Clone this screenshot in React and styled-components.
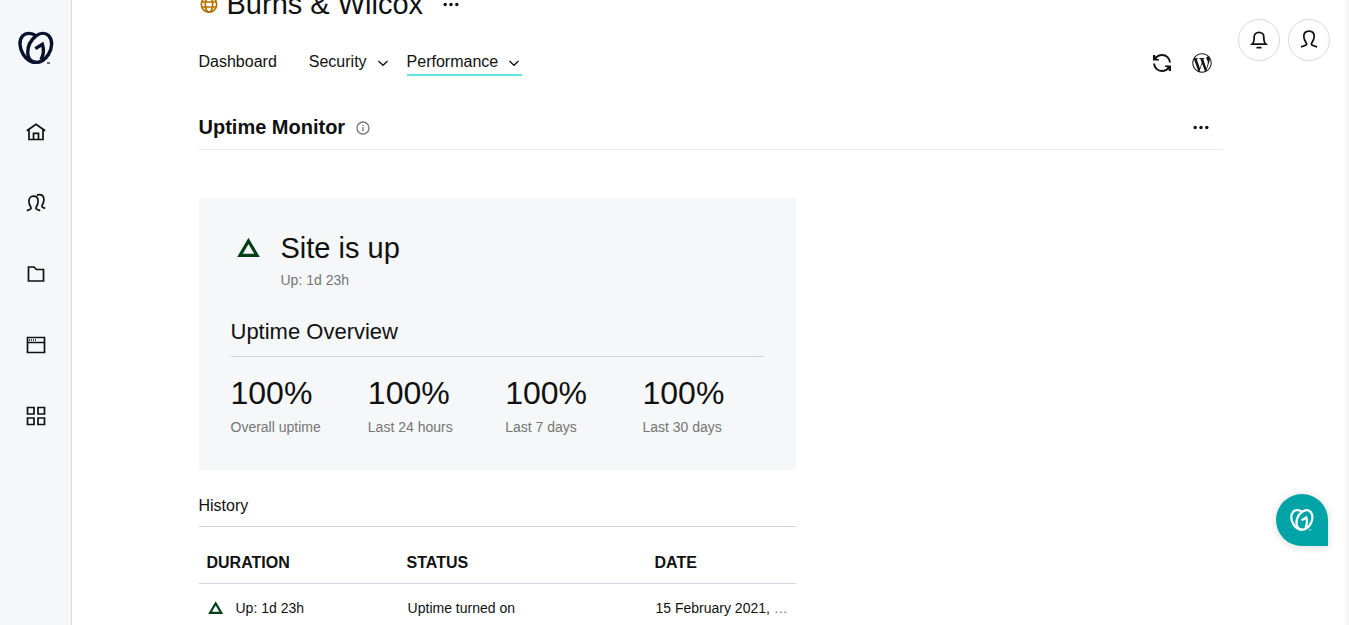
import React from 'react';
import styled, { createGlobalStyle, css } from 'styled-components';
import { FaWordpressSimple } from 'react-icons/fa';

const GlobalStyle = createGlobalStyle`
  * {
    box-sizing: border-box;
  }

  body {
    margin: 0;
    color: #111;
    background-color: #fff;
    font-family: "Liberation Sans", Arial, sans-serif;
    font-size: 16px;
    line-height: 24px;
  }

  h1, h2, h3, h4, p {
    margin: 0;
    font-weight: normal;
  }

  svg {
    display: block;
    flex-shrink: 0;
  }
`;

const Page = styled.div`
  display: flex;
  height: 100vh;
  overflow: hidden;
`;

const Sidebar = styled.nav`
  display: flex;
  flex-direction: column;
  align-items: center;
  flex-shrink: 0;
  width: 72px;
  padding-top: 30px;
  background-color: #f5f7f8;
  border-right: 1px solid #d4dbe0;
`;

const SideMenu = styled.div`
  display: flex;
  flex-direction: column;
  gap: 47px;
  margin-top: 54px;
`;

const SideLink = styled.a`
  color: #111;
`;

const Main = styled.main`
  flex: 1;
  min-width: 0;
  padding: 0 24px;
  box-shadow: inset -6px 0 6px -5px rgba(0, 0, 0, 0.08);
`;

const Container = styled.div`
  max-width: 1024px;
  margin: 0 auto;
`;

const SiteHeader = styled.header`
  display: flex;
  align-items: center;
  margin-top: -12px;
`;

const SiteName = styled.h1`
  margin: 0 20px 0 8px;
  font-size: 29px;
  line-height: 32px;
`;

const IconButton = styled.button`
  padding: 0;
  border: none;
  background: none;
  color: #111;
  cursor: pointer;
`;

const NavBar = styled.div`
  display: flex;
  align-items: center;
  justify-content: space-between;
  margin-top: 30px;
`;

const Tabs = styled.nav`
  display: flex;
  gap: 16px;
`;

const Tab = styled.a`
  display: flex;
  align-items: center;
  gap: 8px;
  margin-right: ${(props) => (props.$plain ? '16px' : '0')};
  border-bottom: 2px solid ${(props) => (props.$active ? '#5ce7df' : 'transparent')};
  color: #111;
  text-decoration: none;
`;

const Tools = styled.div`
  display: flex;
  align-items: center;
  gap: 20px;
  padding-right: 11px;
`;

const SectionHeader = styled.div`
  display: flex;
  align-items: center;
  justify-content: space-between;
  margin-top: 39px;
  padding: 0 14px 10px 0;
  border-bottom: 1px solid #e6e8ea;
`;

const SectionTitle = styled.h2`
  display: flex;
  align-items: center;
  gap: 10px;
  font-size: 20px;
  font-weight: bold;
  color: #111;
`;

const Columns = styled.div`
  display: grid;
  grid-template-columns: 7fr 5fr;
  margin-top: 48px;
`;

const Card = styled.section`
  padding: 32px;
  border-radius: 2px;
  background-color: #f5f7f8;
`;

const Status = styled.div`
  display: flex;
  gap: 20px;
`;

const StatusIcon = styled.div`
  padding: 6px 0 0 6px;
`;

const StatusTitle = styled.h3`
  font-size: 29px;
  line-height: 36px;
`;

const Caption = styled.p`
  margin-top: 4px;
  font-size: 14px;
  line-height: 21px;
  color: #767676;
`;

const OverviewTitle = styled.h3`
  margin-top: 27px;
  padding-bottom: 10px;
  border-bottom: 1px solid #ccd6dc;
  font-size: 22px;
  line-height: 28px;
`;

const Stats = styled.div`
  display: grid;
  grid-template-columns: repeat(4, 1fr);
  gap: 16px;
  margin-top: 16px;
`;

const StatValue = styled.div`
  font-size: 32px;
  line-height: 40px;
`;

const HistoryTitle = styled.h4`
  margin-top: 24px;
  padding-bottom: 8px;
  border-bottom: 1px solid #d0d6dc;
`;

const Table = styled.table`
  width: 100%;
  table-layout: fixed;
  border-collapse: separate;
  border-spacing: 0;
`;

const HeadCell = styled.th`
  width: ${(props) => props.$width};
  padding: 24px 8px 8px;
  border-bottom: 1px solid #d0d6dc;
  text-align: left;
`;

const Cell = styled.td`
  padding: 12px 9px;
  font-size: 14px;
  white-space: nowrap;
`;

const Duration = styled.div`
  display: flex;
  align-items: center;
  gap: 12px;
`;

const Faded = styled.span`
  color: #767676;
`;

const floating = css`
  position: fixed;
  z-index: 10;
`;

const UserActions = styled.div`
  ${floating}
  top: 19px;
  right: 19px;
  display: flex;
  gap: 8px;
`;

const RoundButton = styled.button`
  display: flex;
  align-items: center;
  justify-content: center;
  width: 42px;
  height: 42px;
  padding: 0;
  border: 1px solid #d8d8d8;
  border-radius: 50%;
  background-color: #fff;
  color: #111;
  cursor: pointer;
`;

const ChatButton = styled.button`
  ${floating}
  right: 21px;
  bottom: 79px;
  display: flex;
  align-items: center;
  justify-content: center;
  width: 52px;
  height: 52px;
  padding: 0;
  border: none;
  border-radius: 50% 50% 0 50%;
  background-color: #00a4a6;
  box-shadow: 0 1px 8px rgba(0, 0, 0, 0.15);
  color: #fff;
  cursor: pointer;
`;

const Icon = ({ size = 24, width = 1.7, children }) => (
  <svg width={size} height={size} viewBox="0 0 24 24" fill="none" stroke="currentColor" strokeWidth={width} aria-hidden="true">
    {children}
  </svg>
);

const Logo = ({ size, color }) => (
  <svg width={size} height={size} viewBox="0 0 36 36" fill="none" stroke={color} strokeWidth="3.4" aria-hidden="true">
    <path d="M18 5.800C13.800 2.500 8 2.500 4.700 5.800C.7 10 1.200 18 5.300 24.500C8.200 29 12.500 32.400 18 32.400" />
    <path d="M18 5.800C22.500 2.500 27.500 2.500 30.800 5.800C34.800 10 34.500 18 30.400 24.500C27.500 29 23.500 32.400 18 32.400C13 32.400 9.700 28.500 9.700 22.500C9.700 15.500 13.300 9.500 18 5.800Z" />
    <path d="M17.300 18.600L24.400 14.200C26.200 19.500 25.600 25 23 29.800" />
    <path d="M29 33h3" strokeWidth="1.200" />
  </svg>
);

const HomeIcon = () => (
  <Icon>
    <path d="M2.800 10.800L12 4.200l9.200 6.600M5 9.800v9.700h14V9.800M9.500 19.500v-6.200h5v6.200" />
  </Icon>
);

const PeopleIcon = () => (
  <Icon>
    <path d="M2.800 19.600c3-.9 4.800-1.500 4.200-3C5.700 14.700 4.900 12.500 4.900 10.300 4.900 7 6.800 5.200 9.500 5.200s4.600 1.800 4.600 5.100c0 2.200-.8 4.400-2.100 6.300-.6 1.500 1.200 2.100 4.200 3" />
    <path d="M12.800 4.200c.8-.4 1.600-.6 2.400-.6 2.900 0 4.700 1.900 4.700 5.100 0 2.100-.7 4.100-1.900 5.800-.6 1.600 1 2.200 3.200 2.900" />
  </Icon>
);

const FolderIcon = () => (
  <Icon>
    <path d="M4.500 5h5.500l2.500 2.500h7v11.500h-15z" />
  </Icon>
);

const WindowIcon = () => (
  <Icon>
    <path d="M3.500 4.500h17v15h-17zM3.500 9.500h17" />
    <path d="M5 7h7.500" strokeDasharray="1 1" strokeWidth="1.500" />
  </Icon>
);

const GridIcon = () => (
  <Icon>
    <path d="M3.500 3.500h6.500v6.500H3.500zM14 3.500h6.500v6.500H14zM3.500 14h6.500v6.500H3.500zM14 14h6.500v6.500H14z" />
  </Icon>
);

const GlobeIcon = () => (
  <svg width="20" height="20" viewBox="0 0 20 20" fill="none" stroke="#b37400" strokeWidth="1.700" aria-hidden="true">
    <circle cx="10" cy="10.500" r="7.700" />
    <ellipse cx="10" cy="10.500" rx="3.700" ry="7.700" />
    <path d="M2.800 8h14.400M2.800 13h14.400" />
  </svg>
);

const DotsIcon = () => (
  <svg width="16" height="16" viewBox="0 0 16 16" fill="currentColor" aria-hidden="true">
    <circle cx="2.200" cy="8.500" r="1.700" />
    <circle cx="8" cy="8.500" r="1.700" />
    <circle cx="13.800" cy="8.500" r="1.700" />
  </svg>
);

const ChevronIcon = () => (
  <svg width="16" height="16" viewBox="0 0 16 16" fill="none" stroke="currentColor" strokeWidth="1.300" aria-hidden="true">
    <path d="M3.500 7l4.500 4.300L12.500 7" />
  </svg>
);

const InfoIcon = () => (
  <svg width="16" height="16" viewBox="0 0 16 16" fill="none" stroke="#767676" strokeWidth="1.300" aria-hidden="true">
    <circle cx="8" cy="9" r="6" />
    <path d="M8 8v4.200M8 5.800v1.300" />
  </svg>
);

const SyncIcon = () => (
  <svg width="20" height="20" viewBox="0 0 20 20" fill="none" stroke="currentColor" strokeWidth="2" aria-hidden="true">
    <path d="M18 9.500C17.600 5.200 14.300 2 10.200 2C7.200 2 4.800 3.300 3.300 5.800M2 10.500C2.400 14.800 5.700 18 9.800 18C12.800 18 15.200 16.700 16.700 14.200" />
    <path d="M1 2v5.500h6v-1.500h-2.500L3 2zM19 18v-5.500h-6v1.500h2.500L17 18z" fill="currentColor" stroke="none" />
  </svg>
);

const BellIcon = () => (
  <Icon size={22} width={1.9}>
    <path d="M4.500 16.500c1.600-1.400 2.200-3 2.200-5.200V9C6.700 5.800 9 3.700 12 3.700s5.300 2.100 5.300 5.300v2.300c0 2.200.6 3.800 2.200 5.200zM9.300 20.300h5.400" />
  </Icon>
);

const PersonIcon = () => (
  <Icon size={22} width={1.9}>
    <path d="M3.200 19.500c4.300-1.200 7-2.300 6-4C7.400 13 6.300 10.800 6.300 8.200 6.300 4.500 8.600 2.200 12 2.200s5.700 2.300 5.700 6c0 2.600-1.100 4.800-2.900 7.300-1 1.700 1.700 2.800 6 4" />
  </Icon>
);

const TriangleIcon = ({ size }) => (
  <svg width={size} height={size} viewBox="0 0 24 24" fill="none" stroke="#004018" strokeWidth="3.200" aria-hidden="true">
    <path d="M11.500 5L20 19.400H3z" />
  </svg>
);

const menu = [
  { label: 'Home', icon: HomeIcon },
  { label: 'Clients', icon: PeopleIcon },
  { label: 'Projects', icon: FolderIcon },
  { label: 'Websites', icon: WindowIcon },
  { label: 'Apps', icon: GridIcon },
];

const stats = [
  { value: '100%', label: 'Overall uptime' },
  { value: '100%', label: 'Last 24 hours' },
  { value: '100%', label: 'Last 7 days' },
  { value: '100%', label: 'Last 30 days' },
];

const App = () => {
  return (
    <Page>
      <GlobalStyle />
      <Sidebar>
        <SideLink href="#" aria-label="GoDaddy">
          <Logo size={36} color="#09102b" />
        </SideLink>
        <SideMenu>
          {menu.map(({ label, icon: MenuIcon }) => (
            <SideLink key={label} href="#" aria-label={label}>
              <MenuIcon />
            </SideLink>
          ))}
        </SideMenu>
      </Sidebar>

      <Main>
        <Container>
          <SiteHeader>
            <GlobeIcon />
            <SiteName>Burns &amp; Wilcox</SiteName>
            <IconButton aria-label="Site options"><DotsIcon /></IconButton>
          </SiteHeader>

          <NavBar>
            <Tabs>
              <Tab href="#" $plain>Dashboard</Tab>
              <Tab href="#">Security<ChevronIcon /></Tab>
              <Tab href="#" $active>Performance<ChevronIcon /></Tab>
            </Tabs>
            <Tools>
              <IconButton aria-label="Sync"><SyncIcon /></IconButton>
              <IconButton aria-label="WordPress admin"><FaWordpressSimple size={20} /></IconButton>
            </Tools>
          </NavBar>

          <SectionHeader>
            <SectionTitle>Uptime Monitor<InfoIcon /></SectionTitle>
            <IconButton aria-label="Monitor options"><DotsIcon /></IconButton>
          </SectionHeader>

          <Columns>
            <div>
              <Card>
                <Status>
                  <StatusIcon><TriangleIcon size={24} /></StatusIcon>
                  <div>
                    <StatusTitle>Site is up</StatusTitle>
                    <Caption>Up: 1d 23h</Caption>
                  </div>
                </Status>
                <OverviewTitle>Uptime Overview</OverviewTitle>
                <Stats>
                  {stats.map((stat) => (
                    <div key={stat.label}>
                      <StatValue>{stat.value}</StatValue>
                      <Caption>{stat.label}</Caption>
                    </div>
                  ))}
                </Stats>
              </Card>

              <HistoryTitle>History</HistoryTitle>
              <Table>
                <thead>
                  <tr>
                    <HeadCell $width="33.5%">DURATION</HeadCell>
                    <HeadCell $width="41.5%">STATUS</HeadCell>
                    <HeadCell $width="25%">DATE</HeadCell>
                  </tr>
                </thead>
                <tbody>
                  <tr>
                    <Cell>
                      <Duration><TriangleIcon size={16} />Up: 1d 23h</Duration>
                    </Cell>
                    <Cell>Uptime turned on</Cell>
                    <Cell>15 February 2021, <Faded>…</Faded></Cell>
                  </tr>
                </tbody>
              </Table>
            </div>
          </Columns>
        </Container>
      </Main>

      <UserActions>
        <RoundButton aria-label="Notifications"><BellIcon /></RoundButton>
        <RoundButton aria-label="Account"><PersonIcon /></RoundButton>
      </UserActions>
      <ChatButton aria-label="Help">
        <Logo size={24} color="#fff" />
      </ChatButton>
    </Page>
  );
};

export default App;
